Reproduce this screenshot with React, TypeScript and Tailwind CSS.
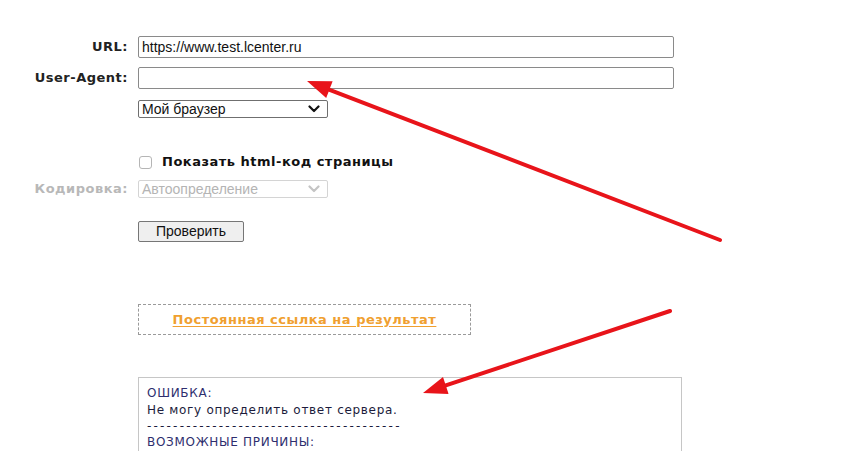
import React from "react";

const labelCls =
  "w-[128px] shrink-0 text-right font-['DejaVu_Sans',sans-serif] font-bold text-[13px] tracking-[0.5px] text-[#222]";

function Chevron({ color }: { color: string }) {
  return (
    <svg width="12" height="8" viewBox="0 0 12 8" fill="none">
      <path d="M1.5 1.5 L6 6 L10.5 1.5" stroke={color} strokeWidth="2.2" strokeLinecap="round" strokeLinejoin="round" />
    </svg>
  );
}

export default function App() {
  const dashes = "-".repeat(39);
  return (
    <div className="relative w-[850px] h-[451px] overflow-hidden bg-white">
      <div className="flex flex-col pt-[36px]">
        {/* URL */}
        <div className="flex items-center h-[22px] gap-[10px]">
          <div className={labelCls}>URL:</div>
          <div className="w-[536px] h-[22px] border border-[#8a8a8a] rounded-[2px] flex items-center px-[3px] font-['Liberation_Sans',sans-serif] text-[14px] text-[#111]">
            https://www.test.lcenter.ru
          </div>
        </div>
        {/* User-Agent */}
        <div className="flex items-center h-[22px] gap-[10px] mt-[9px]">
          <div className={labelCls}>User-Agent:</div>
          <div className="w-[536px] h-[22px] border border-[#8a8a8a] rounded-[2px]" />
        </div>
        {/* Select */}
        <div className="flex items-center h-[18px] gap-[10px] mt-[11px]">
          <div className="w-[128px] shrink-0" />
          <div className="w-[190px] h-[18px] border border-[#6f6f6f] rounded-[2px] flex items-center justify-between pl-[3px] pr-[7px] font-['Liberation_Sans',sans-serif] text-[14px] text-[#111]">
            <span>Мой браузер</span>
            <Chevron color="#111" />
          </div>
        </div>
        {/* Checkbox */}
        <div className="flex items-center h-[14px] gap-[10px] mt-[37px]">
          <div className="w-[128px] shrink-0" />
          <div className="flex items-center gap-[10px]">
            <div className="w-[13px] h-[13px] ml-[1px] border border-[#b5b5b5] rounded-[3px] bg-white" />
            <span className="font-['DejaVu_Sans',sans-serif] font-bold text-[13px] tracking-[0.5px] text-[#111] -mt-[1px]">
              Показать html-код страницы
            </span>
          </div>
        </div>
        {/* Encoding */}
        <div className="flex items-center h-[18px] gap-[10px] mt-[11px]">
          <div className={labelCls + " !text-[#b8b8b8]"}>Кодировка:</div>
          <div className="w-[190px] h-[18px] border border-[#d4d4d4] rounded-[2px] flex items-center justify-between pl-[3px] pr-[7px] font-['Liberation_Sans',sans-serif] text-[14px] text-[#b4b4b4]">
            <span>Автоопределение</span>
            <Chevron color="#c4c4c4" />
          </div>
        </div>
        {/* Button */}
        <div className="flex items-center h-[21px] gap-[10px] mt-[23px]">
          <div className="w-[128px] shrink-0" />
          <div className="w-[106px] h-[21px] border border-[#767676] rounded-[2px] bg-[#efefef] flex items-center justify-center font-['Liberation_Sans',sans-serif] text-[14px] text-[#111]">
            Проверить
          </div>
        </div>
        {/* Permalink */}
        <div className="flex items-center gap-[10px] mt-[62px]">
          <div className="w-[128px] shrink-0" />
          <div className="w-[333px] h-[31px] border border-dashed border-[#9a9a9a] flex items-center justify-center">
            <span className="font-['DejaVu_Sans',sans-serif] font-bold text-[13px] tracking-[0.5px] text-[#f0a030] underline underline-offset-2">
              Постоянная ссылка на результат
            </span>
          </div>
        </div>
        {/* Result */}
        <div className="flex gap-[10px] mt-[42px]">
          <div className="w-[128px] shrink-0" />
          <div className="w-[544px] h-[120px] border border-[#c6c6c6] pt-[7px] pl-[8px] font-['DejaVu_Sans',sans-serif] text-[12px] tracking-[0.7px] leading-[17px]">
            <div className="text-[#2e2e6e]">ОШИБКА:</div>
            <div className="text-[#1c1c3c]">Не могу определить ответ сервера.</div>
            <div className="text-[#1c1c3c] leading-[15px] tracking-[2.2px]">{dashes}</div>
            <div className="text-[#2e2e6e]">ВОЗМОЖНЫЕ ПРИЧИНЫ:</div>
          </div>
        </div>
      </div>

      {/* Annotation arrows */}
      <svg className="absolute left-0 top-0 pointer-events-none" width="850" height="451" viewBox="0 0 850 451">
        <line x1="720" y1="240" x2="329" y2="89.6" stroke="#e8141a" strokeWidth="4" strokeLinecap="round" />
        <polygon points="307,81 332.6,81.2 326.2,98" fill="#e8141a" />
        <line x1="670" y1="311" x2="445.8" y2="385.4" stroke="#e8141a" strokeWidth="4" strokeLinecap="round" />
        <polygon points="423,393 443,376.9 448.6,393.9" fill="#e8141a" />
      </svg>
    </div>
  );
}
